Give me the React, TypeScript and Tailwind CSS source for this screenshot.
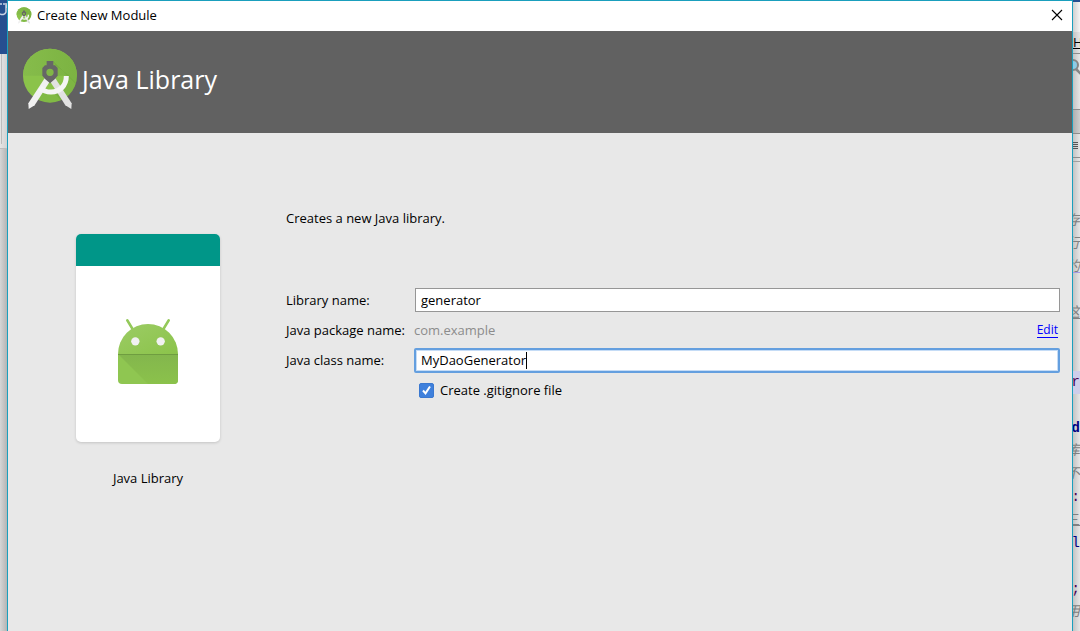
import { useState } from 'react';

interface EditorLine {
  text: string;
  className?: string;
}

const editorLines: EditorLine[] = [
  { text: '存', className: 'text-[#808080] italic' },
  { text: '行', className: 'text-[#808080] italic' },
  { text: '约', className: 'text-[#808080] italic underline decoration-[#a79be0]' },
  { text: '' },
  { text: '这', className: 'text-[#808080] italic underline' },
  { text: '' },
  { text: '' },
  { text: 'r', className: 'bg-[#ceceea] text-[#4b0050]' },
  { text: '' },
  { text: 'd', className: 'font-bold text-[#000080]' },
  { text: '库', className: 'text-[#808080] italic' },
  { text: '不', className: 'text-[#808080] italic' },
  { text: ':', className: 'text-[#4b0050]' },
  { text: '三', className: 'text-[#808080] underline' },
  { text: 'l', className: 'text-[#000080]' },
  { text: '' },
  { text: ';', className: 'text-[#4b0050]' },
  { text: '用', className: 'text-[#808080] italic' },
];

function StudioLogo({ className }: { className: string }) {
  return (
    <svg viewBox="21 24 168 186" className={className} aria-hidden="true">
      <defs>
        <linearGradient id="studioTop" x1="0" y1="0" x2="1" y2="0">
          <stop offset="0" stopColor="#86bc4b" />
          <stop offset="1" stopColor="#7cb342" />
        </linearGradient>
        <clipPath id="studioDisc">
          <circle cx="105" cy="107" r="81" />
        </clipPath>
      </defs>
      <circle cx="105" cy="107" r="81" fill="#8bc34a" />
      <path d="M24 107a81 81 0 0 1 162 0z" fill="url(#studioTop)" />
      <g clipPath="url(#studioDisc)" fill="#33691e">
        <path d="M114 63l75 75v-31h-27l-40-31z" opacity="0.16" />
        <path d="M161 108l28 28v60h-40l-30-38z" opacity="0.14" />
        <path d="M80 155l26 10 30-10 12 34H60z" opacity="0.1" />
      </g>
      <path d="M89 115l16 9-46 72-18 11-1-17z" fill="#f1f1f1" />
      <path d="M121 115l-16 9 46 72 18 11 1-17z" fill="#e2e2e2" />
      <path d="M154 108c0 29-20 48-46 48-14 0-25-5-33-13" fill="none" stroke="#f5f5f5" strokeWidth="15" />
      <path
        fillRule="evenodd"
        d="M95 63h20v13h5l8 8v23l-9 11-14 12-14-12-9-11V84l8-8h5zM105 86a11 11 0 1 0 0 22a11 11 0 1 0 0-22z"
        fill="#666666"
      />
    </svg>
  );
}

function AndroidRobot() {
  return (
    <svg viewBox="174 294 180 198" className="h-[66px] w-[60px]" aria-hidden="true">
      <defs>
        <linearGradient id="robotHead" x1="0" y1="0" x2="1" y2="1">
          <stop offset="0" stopColor="#9ccc65" />
          <stop offset="1" stopColor="#8bc34a" />
        </linearGradient>
        <linearGradient id="robotShade" x1="0" y1="0" x2="0" y2="1">
          <stop offset="0" stopColor="#83b64d" />
          <stop offset="1" stopColor="#8bc24b" />
        </linearGradient>
      </defs>
      <path d="M202 301l15 25M326 301l-15 25" stroke="#94c95a" strokeWidth="8" strokeLinecap="round" />
      <path d="M174 402a90 90 0 0 1 180 0z" fill="url(#robotHead)" />
      <path d="M174 402h180v78a12 12 0 0 1-12 12H186a12 12 0 0 1-12-12z" fill="#8fc651" />
      <path d="M174 402h180v78a12 12 0 0 1-12 12h-78z" fill="url(#robotShade)" />
      <path d="M174 402h180v3H174z" fill="#6f9d40" />
      <circle cx="226" cy="364" r="12.5" fill="#f1f1f1" />
      <circle cx="302" cy="364" r="12.5" fill="#f1f1f1" />
    </svg>
  );
}

function LeftBackdrop() {
  return (
    <div className="flex w-[7px] shrink-0 flex-col overflow-hidden" aria-hidden="true">
      <div className="h-[54px] shrink-0 bg-[#264f90]">
        <svg viewBox="0 0 7 20" className="h-5 w-[7px]">
          <path d="M0 4h2M3 4h4v4M6 5v7c-1 3-4 3-6 2" fill="none" stroke="#c9d3e4" strokeWidth="1.5" />
        </svg>
      </div>
      <div className="h-[95px] shrink-0 border-b border-[#bcbcbc] bg-linear-to-r from-[#e6e6e6] to-[#d2d2d2] pl-px">
        <div className="h-[90px] border-l border-[#bdbdbd]" />
      </div>
      <div className="flex-1 bg-linear-to-r from-[#d6d6d6] to-[#b4b4b4]" />
    </div>
  );
}

function RightBackdrop() {
  return (
    <div
      className="flex w-[7px] shrink-0 flex-col overflow-hidden bg-linear-to-r from-[#c4c4c4] to-[#e6e6e6] font-['Liberation_Mono','Noto_Sans_CJK_SC',monospace]"
      aria-hidden="true"
    >
      <div className="h-[2px] shrink-0 bg-[#264f90]" />
      <div className="h-[30px] shrink-0 bg-linear-to-r from-[#d0d0d0] to-[#f4f4f4]" />
      <div className="h-[22px] shrink-0 border-b border-[#8d8d8d] font-['Open_Sans',sans-serif] text-[13px] leading-5 text-black underline">
        H
      </div>
      <div className="h-[56px] shrink-0 border-b border-[#8d8d8d] pt-1">
        <svg viewBox="0 0 7 18" className="h-[18px] w-[7px]">
          <circle cx="0" cy="7" r="5" fill="#8ecbe4" stroke="#858585" strokeWidth="2" />
          <path d="M3 11l5 5" stroke="#858585" strokeWidth="2.5" />
        </svg>
      </div>
      <div className="h-[24px] shrink-0 border-b border-[#8d8d8d] bg-linear-to-r from-[#aeaeae] to-[#cfcfcf]" />
      <div className="h-[24px] shrink-0 border-b border-[#8d8d8d] pt-2">
        <svg viewBox="0 0 7 8" className="h-2 w-[7px]">
          <path d="M0 .5h5M0 2.5h5M0 4.5h5M0 6.5h5" stroke="#555555" />
        </svg>
      </div>
      <div className="h-[52px] shrink-0 pt-[3px]">
        <div className="border-t border-[#a0a0a0]" />
      </div>
      {editorLines.map((line, i) => (
        <div
          key={i}
          className={`flex h-[23px] shrink-0 justify-end text-[14px] leading-[23px] ${line.className ?? ''}`}
        >
          {line.text}
        </div>
      ))}
    </div>
  );
}

export default function App() {
  const [libraryName, setLibraryName] = useState('generator');
  const [className, setClassName] = useState('MyDaoGenerator');
  const [gitignore, setGitignore] = useState(true);

  return (
    <div className="flex h-screen overflow-hidden font-['Open_Sans','Noto_Sans_CJK_SC',sans-serif] text-[13px] leading-5 text-black">
      <LeftBackdrop />

      <main className="flex min-w-0 flex-1 flex-col border-x border-t border-[#1a9fbd] bg-[#e8e8e8]">
        <div className="flex h-[30px] shrink-0 items-center bg-white pr-[7px] pb-[2px] pl-2">
          <StudioLogo className="h-[17px] w-4" />
          <span className="ml-[5px] flex-1">Create New Module</span>
          <button type="button" aria-label="Close" className="flex h-4 w-4 items-center justify-center">
            <svg viewBox="0 0 12 12" className="h-3 w-3">
              <path d="M1 1l10 10M11 1l-10 10" stroke="#000000" strokeWidth="1.1" />
            </svg>
          </button>
        </div>

        <header className="flex h-[102px] shrink-0 items-center bg-[#616161] pb-[6px] pl-[14px] text-white">
          <StudioLogo className="h-[62px] w-14" />
          <h1 className="ml-1 text-[25px] leading-8">Java Library</h1>
        </header>

        <div className="flex flex-1 pr-3 pl-[68px]">
          <figure className="mt-[101px] w-36 shrink-0">
            <div className="flex h-52 flex-col overflow-hidden rounded-[5px] bg-white shadow-[0_1px_3px_rgba(0,0,0,0.16)]">
              <div className="h-8 bg-[#009688]" />
              <div className="flex flex-1 items-center justify-center pb-[6px]">
                <AndroidRobot />
              </div>
            </div>
            <figcaption className="mt-[26px] text-center">Java Library</figcaption>
          </figure>

          <form className="mt-[75px] ml-[66px] min-w-0 flex-1" onSubmit={(e) => e.preventDefault()}>
            <p>Creates a new Java library.</p>

            <div className="mt-[57px] grid grid-cols-[128px_1fr] auto-rows-[30px] items-center">
              <label htmlFor="library-name">Library name:</label>
              <input
                id="library-name"
                type="text"
                value={libraryName}
                onChange={(e) => setLibraryName(e.target.value)}
                className="ml-px h-6 min-w-0 border border-[#969696] bg-white px-[5px] outline-none"
              />

              <span>Java package name:</span>
              <div className="flex items-center justify-between pr-[2px]">
                <span className="text-[#8c8c8c]">com.example</span>
                <a href="#edit" className="border-b border-[#0000ff] text-[12px] leading-[14px] text-[#0000ff]">
                  Edit
                </a>
              </div>

              <label htmlFor="class-name">Java class name:</label>
              <div className="relative flex">
                <input
                  id="class-name"
                  type="text"
                  value={className}
                  onChange={(e) => setClassName(e.target.value)}
                  className="h-[25px] min-w-0 flex-1 rounded-[2px] border-2 border-[#649fdf] bg-white px-[5px] shadow-[inset_0_0_0_1px_#c5dcf6] outline-none"
                />
                <span className="absolute top-1 left-28 h-[17px] w-px bg-black" />
              </div>

              <label className="col-start-2 ml-[5px] flex items-center gap-[6px] justify-self-start">
                <span className="relative flex">
                  <input
                    type="checkbox"
                    checked={gitignore}
                    onChange={(e) => setGitignore(e.target.checked)}
                    className="h-[15px] w-[15px] appearance-none rounded-[2px] border border-[#a0a0a0] bg-white checked:border-[#3a78d0] checked:bg-[#3f80dc]"
                  />
                  {gitignore && (
                    <svg viewBox="0 0 15 15" className="pointer-events-none absolute inset-0 h-[15px] w-[15px]">
                      <path d="M4 7.5l2.5 2.8L11 3.5" fill="none" stroke="#ffffff" strokeWidth="2" />
                    </svg>
                  )}
                </span>
                Create .gitignore file
              </label>
            </div>
          </form>
        </div>
      </main>

      <RightBackdrop />
    </div>
  );
}
